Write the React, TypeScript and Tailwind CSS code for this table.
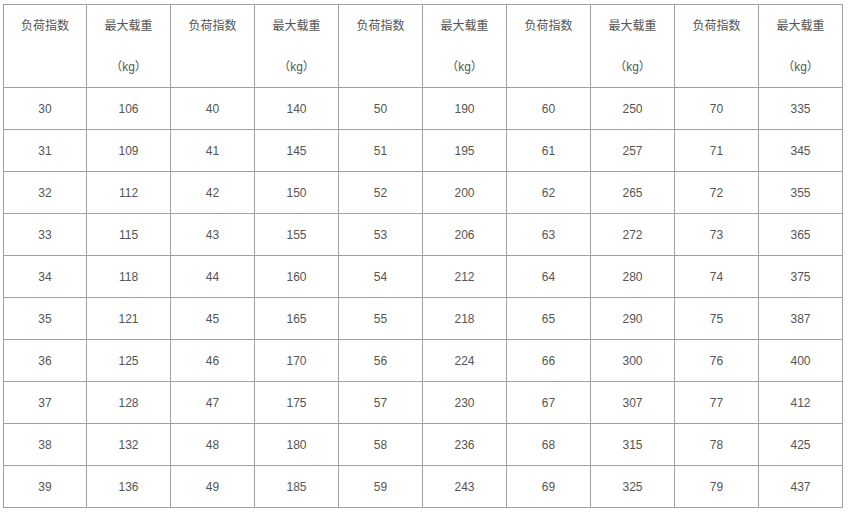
import { Fragment } from "react";

const rows: [number, number][][] = [];
const index = [30, 40, 50, 60, 70];
const loads = [
  [106, 109, 112, 115, 118, 121, 125, 128, 132, 136],
  [140, 145, 150, 155, 160, 165, 170, 175, 180, 185],
  [190, 195, 200, 206, 212, 218, 224, 230, 236, 243],
  [250, 257, 265, 272, 280, 290, 300, 307, 315, 325],
  [335, 345, 355, 365, 375, 387, 400, 412, 425, 437],
];

for (let r = 0; r < 10; r++) {
  rows.push(index.map((start, g) => [start + r, loads[g][r]]));
}

const headClass = "border border-[#a0a0a0] p-0 text-center align-top font-normal";
const cellClass = "border border-[#a0a0a0] p-0 text-center align-middle";

export default function App() {
  return (
    <div
      className="bg-white w-[851px] h-[512px] pl-[3px] pt-[4px] text-[12px] text-[#555]"
      style={{ fontFamily: '"Liberation Sans", "Noto Sans CJK SC", sans-serif' }}
    >
      <table className="table-fixed border-collapse w-[840px]">
        <colgroup>
          <col className="w-[83px]" />
          {Array.from({ length: 9 }).map((_, i) => (
            <col key={i} className="w-[84px]" />
          ))}
        </colgroup>
        <thead>
          <tr className="h-[82px]">
            {index.map((start) => (
              <Fragment key={start}>
                <th className={headClass}>
                  <p className="leading-[42px]">负荷指数</p>
                </th>
                <th className={headClass}>
                  <p className="leading-[42px]">最大载重</p>
                  <p className="leading-[40px]">（kg）</p>
                </th>
              </Fragment>
            ))}
          </tr>
        </thead>
        <tbody>
          {rows.map((row, i) => (
            <tr key={i} className="h-[42px]">
              {row.map(([li, kg]) => (
                <Fragment key={li}>
                  <td className={cellClass}>{li}</td>
                  <td className={cellClass}>{kg}</td>
                </Fragment>
              ))}
            </tr>
          ))}
        </tbody>
      </table>
    </div>
  );
}
